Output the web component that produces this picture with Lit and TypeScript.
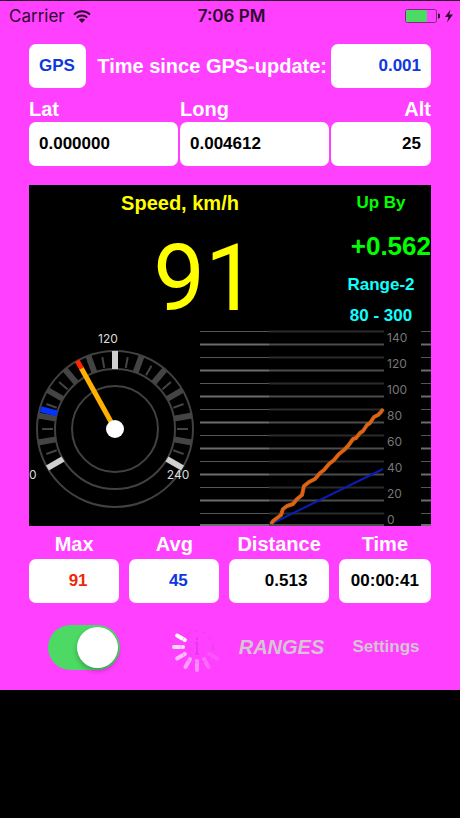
import { LitElement, html, svg, css } from "lit";
import { customElement, property, state } from "lit/decorators.js";

/** Round dial, one degree per km/h, zero at the lower left. */
@customElement("speed-gauge")
class SpeedGauge extends LitElement {
  @property({ type: Number }) speed = 0;
  @property({ type: Number }) average = 0;

  static styles = css`
    :host { display: block; }
    svg { display: block; width: 100%; }
    .ring { fill: none; stroke: #414141; stroke-width: 2; }
    .major { stroke: #444; stroke-width: 6; }
    .minor { stroke: #444; stroke-width: 2; }
    .bright { stroke: #d0d0d0; stroke-width: 6; }
    .average { stroke: #0433ff; stroke-width: 6; }
    .needle { stroke: #ffb000; stroke-width: 5; }
    .tip { stroke: #ff2600; stroke-width: 5; }
    .hub { fill: #fff; }
    text { font: 12px Inter, sans-serif; fill: #ddd; }
  `;

  private tick(value: number, from: number, to: number, cls: string) {
    return svg`<line class=${cls} x1="115" x2="115" y1=${429 - from} y2=${429 - to}
      transform="rotate(${value - 120} 115 429)"></line>`;
  }

  render() {
    const steps = Array.from({ length: 13 }, (_, i) => i * 20);
    return html`
      <svg viewBox="29 331 171 195" role="img" aria-label="Speed gauge">
        <circle class="ring" cx="115" cy="429" r="78"></circle>
        <circle class="ring" cx="115" cy="429" r="60"></circle>
        <circle class="ring" cx="115" cy="429" r="43"></circle>
        ${steps.map((v) => this.tick(v, 60, 78, v % 120 === 0 ? "bright" : "major"))}
        ${steps.slice(0, 12).map((v) => this.tick(v + 10, 62, 73, "minor"))}
        ${this.tick(this.average, 60, 77, "average")}
        ${this.tick(this.speed, 0, 70, "needle")}
        ${this.tick(this.speed, 69, 78, "tip")}
        <circle class="hub" cx="115" cy="429" r="9"></circle>
        <text x="108" y="343" text-anchor="middle">120</text>
        <text x="29" y="479">0</text>
        <text x="178" y="479" text-anchor="middle">240</text>
      </svg>
    `;
  }
}

@customElement("speed-chart")
class SpeedChart extends LitElement {
  static styles = css`
    :host { display: block; }
    svg { display: block; width: 100%; overflow: visible; }
    .line { stroke: #2b2b2b; stroke-width: 2; }
    .line.strong { stroke: #4c4c4c; }
    .old { stroke: #555; stroke-width: 1; }
    .old.strong { stroke: #6c6c6c; stroke-width: 2; }
    .speed { fill: none; stroke: #b06a14; stroke-width: 4; stroke-linejoin: round; }
    .core { fill: none; stroke: #f55a14; stroke-width: 2; stroke-linejoin: round; }
    .average { fill: none; stroke: #0a1eb4; stroke-width: 2; }
    text { font: 12px Inter, sans-serif; fill: #777; }
  `;

  render() {
    const rows = Array.from({ length: 16 }, (_, i) => i);
    const trace =
      "271,524 273,521 277,518 281,515 283,509 287,506 293,504 297,499 302,495 304,486 " +
      "309,482 315,479 320,473 324,470 329,464 334,460 339,454 344,450 348,446 353,439 " +
      "356,438 360,433 363,431 367,425 370,423 374,417 378,415 381,412 383,409";
    return html`
      <svg viewBox="200 331 231 195" role="img" aria-label="Speed history">
        ${rows.map((i) => {
          const y = i === 15 ? 525 : 331.5 + i * 13;
          const strong = i % 2 === 1 ? "strong" : "";
          return svg`
            <line class="old ${strong}" x1="200" x2="269" y1=${y} y2=${y}></line>
            <line class="line ${strong}" x1="269" x2="384" y1=${y} y2=${y}></line>
            <line class="old ${strong}" x1="421" x2="431" y1=${y} y2=${y}></line>`;
        })}
        <polyline class="average" points="271,524 383,469"></polyline>
        <polyline class="speed" points=${trace}></polyline>
        <polyline class="core" points=${trace}></polyline>
        ${rows.slice(0, 8).map(
          (i) => svg`<text x="387" y=${524 - i * 26}>${i * 20}</text>`
        )}
      </svg>
    `;
  }
}

@customElement("app-root")
class AppRoot extends LitElement {
  @state() private running = true;

  static styles = css`
    :host {
      display: block;
      min-height: 100vh;
      background: #000;
      font-family: "Liberation Sans", Arial, sans-serif;
      font-weight: bold;
      font-size: 20px;
      line-height: 24px;
      color: #fff;
    }
    * { box-sizing: border-box; }
    .screen { background: #ff40ff; border-top: 1px solid #2c0a2c; }
    .status {
      display: grid;
      grid-template-columns: 1fr auto 1fr;
      align-items: center;
      height: 30px;
      padding: 0 6px 0 9px;
      font: 17px Inter, sans-serif;
      color: #2b0a2b;
    }
    .status .side { display: flex; align-items: center; gap: 8px; }
    .status .end { justify-content: flex-end; gap: 4px; }
    .status svg { display: block; }
    .clock { font-weight: 600; }
    .content { padding: 13px 29px 20px; }
    .top { display: grid; grid-template-columns: 57fr 241fr 100fr; gap: 2px; align-items: center; }
    .top label { text-align: right; padding-right: 2px; white-space: nowrap; }
    .position { display: grid; grid-template-columns: 149fr 149fr 100fr; gap: 2px; margin-top: 9px; }
    .totals { display: grid; grid-template-columns: 90fr 90fr 99fr 92fr; column-gap: 10px; margin-top: 6px; }
    .cell { display: flex; flex-direction: column; gap: 1px; min-width: 0; }
    .totals .cell { gap: 3px; text-align: center; }
    .box {
      display: block;
      width: 100%;
      height: 44px;
      margin: 0;
      padding: 0 10px 1px;
      border: 0;
      border-radius: 7px;
      background: #fff;
      font: bold 17px "Liberation Sans", Arial, sans-serif;
      color: #000;
      text-align: inherit;
    }
    .right { text-align: right; }
    .blue { color: #0f37e0; }
    .red { color: #f02808; }
    .shift { padding-left: 18px; }
    .shift-more { padding-left: 24px; }
    .panel { margin-top: 19px; background: #000; }
    .readout { display: grid; grid-template-columns: 302fr 100fr; height: 146px; padding-top: 6px; text-align: center; }
    .title { color: #ff0; }
    .speed {
      margin-top: 16px;
      padding-left: 50px;
      font-family: Roboto, sans-serif;
      font-weight: normal;
      font-size: 92px;
      line-height: 96px;
      color: #ff0;
    }
    .info { display: flex; flex-direction: column; font-size: 17px; color: #1ff; }
    .up { color: #0f0; }
    .gain { margin: 16px 0 12px; font-size: 26px; line-height: 30px; color: #0f0; text-align: right; }
    .range { margin-bottom: 7px; }
    .plots { display: grid; grid-template-columns: 171fr 231fr; }
    .controls {
      display: grid;
      grid-template-columns: 110fr 83fr 119fr 90fr;
      align-items: center;
      justify-items: center;
      height: 48px;
      margin-top: 19px;
    }
    .switch {
      appearance: none;
      display: flex;
      justify-content: flex-start;
      width: 72px;
      height: 45px;
      margin: 0;
      padding: 2px;
      border-radius: 23px;
      background: #e94fe9;
    }
    .switch::before {
      content: "";
      width: 41px;
      height: 41px;
      border-radius: 50%;
      background: #fff;
      box-shadow: 0 3px 5px rgba(0, 0, 0, 0.25);
    }
    .switch:checked { justify-content: flex-end; background: #4cd964; }
    .spinner { display: block; justify-self: end; }
    .link {
      padding: 0;
      border: 0;
      background: none;
      font: bold 17px/24px "Liberation Sans", Arial, sans-serif;
      color: #d4c4d4;
    }
    .ranges { font-size: 20px; font-style: italic; }
  `;

  private field(id: string, label: string, value: string, box = "", cell = "") {
    return html`
      <div class="cell ${cell}">
        <label for=${id}>${label}</label>
        <input class="box ${box}" id=${id} type="text" readonly .value=${value} />
      </div>
    `;
  }

  private spinner() {
    const fade = [1, 0.8, 0.65, 0.5, 0.4, 0.22, 0.1];
    return html`
      <svg class="spinner" width="50" height="50" viewBox="-25 -25 50 50" role="img" aria-label="Busy">
        ${fade.map(
          (o, i) => svg`<line x1="0" x2="0" y1="-14" y2="-23" stroke="#fff" stroke-width="4"
            stroke-linecap="round" opacity=${o} transform="rotate(${300 - i * 30})"></line>`
        )}
        <circle r="16" fill="none" stroke="#c030d0" stroke-opacity="0.3" stroke-dasharray="4 4"></circle>
        <path d="M0-10v3M-2-4h2V7M-2 7h4" fill="none" stroke="#c030d0" stroke-opacity="0.4" stroke-width="2"></path>
      </svg>
    `;
  }

  render() {
    return html`
      <main class="screen">
        <div class="status">
          <div class="side">
            <span>Carrier</span>
            <svg width="18" height="13" viewBox="0 0 18 13" fill="none" stroke="#2b0a2b" stroke-width="2">
              <path d="M1 4.6a11.4 11.4 0 0 1 16 0"></path>
              <path d="M3.8 7.6a7.4 7.4 0 0 1 10.4 0"></path>
              <path d="M9 13L5.9 9.8a4.4 4.4 0 0 1 6.2 0z" fill="#2b0a2b" stroke="none"></path>
            </svg>
          </div>
          <span class="clock">7:06 PM</span>
          <div class="side end">
            <svg width="35" height="14" viewBox="0 0 35 14">
              <rect x="0.5" y="0.5" width="31" height="13" rx="2" fill="none" stroke="#7c2a7c"></rect>
              <rect x="1" y="1" width="21" height="12" rx="1" fill="#4cd964"></rect>
              <path d="M33 4.5a2.5 2.5 0 0 1 0 5z" fill="#2b0a2b"></path>
            </svg>
            <svg width="10" height="14" viewBox="0 0 10 14">
              <path d="M6.5 0.5L1 8h3.5L3 13.5L9 5.5H5.3z" fill="#2b0a2b"></path>
            </svg>
          </div>
        </div>

        <div class="content">
          <div class="top">
            <button class="box blue" type="button">GPS</button>
            <label for="since">Time since GPS-update:</label>
            <input class="box blue right" id="since" type="text" readonly .value=${"0.001"} />
          </div>

          <div class="position">
            ${this.field("lat", "Lat", "0.000000")}
            ${this.field("long", "Long", "0.004612")}
            ${this.field("alt", "Alt", "25", "", "right")}
          </div>

          <section class="panel">
            <div class="readout">
              <div>
                <div class="title">Speed, km/h</div>
                <div class="speed">91</div>
              </div>
              <div class="info">
                <div class="up">Up By</div>
                <div class="gain">+0.562</div>
                <div class="range">Range-2</div>
                <div>80 - 300</div>
              </div>
            </div>
            <div class="plots">
              <speed-gauge .speed=${91} .average=${45}></speed-gauge>
              <speed-chart></speed-chart>
            </div>
          </section>

          <div class="totals">
            ${this.field("max", "Max", "91", "red shift")}
            ${this.field("avg", "Avg", "45", "blue shift")}
            ${this.field("distance", "Distance", "0.513", "shift-more")}
            ${this.field("time", "Time", "00:00:41")}
          </div>

          <div class="controls">
            <input class="switch" type="checkbox" role="switch" aria-label="Tracking"
              .checked=${this.running}
              @change=${(e: Event) => (this.running = (e.target as HTMLInputElement).checked)} />
            ${this.spinner()}
            <button class="link ranges" type="button">RANGES</button>
            <button class="link" type="button">Settings</button>
          </div>
        </div>
      </main>
    `;
  }
}
